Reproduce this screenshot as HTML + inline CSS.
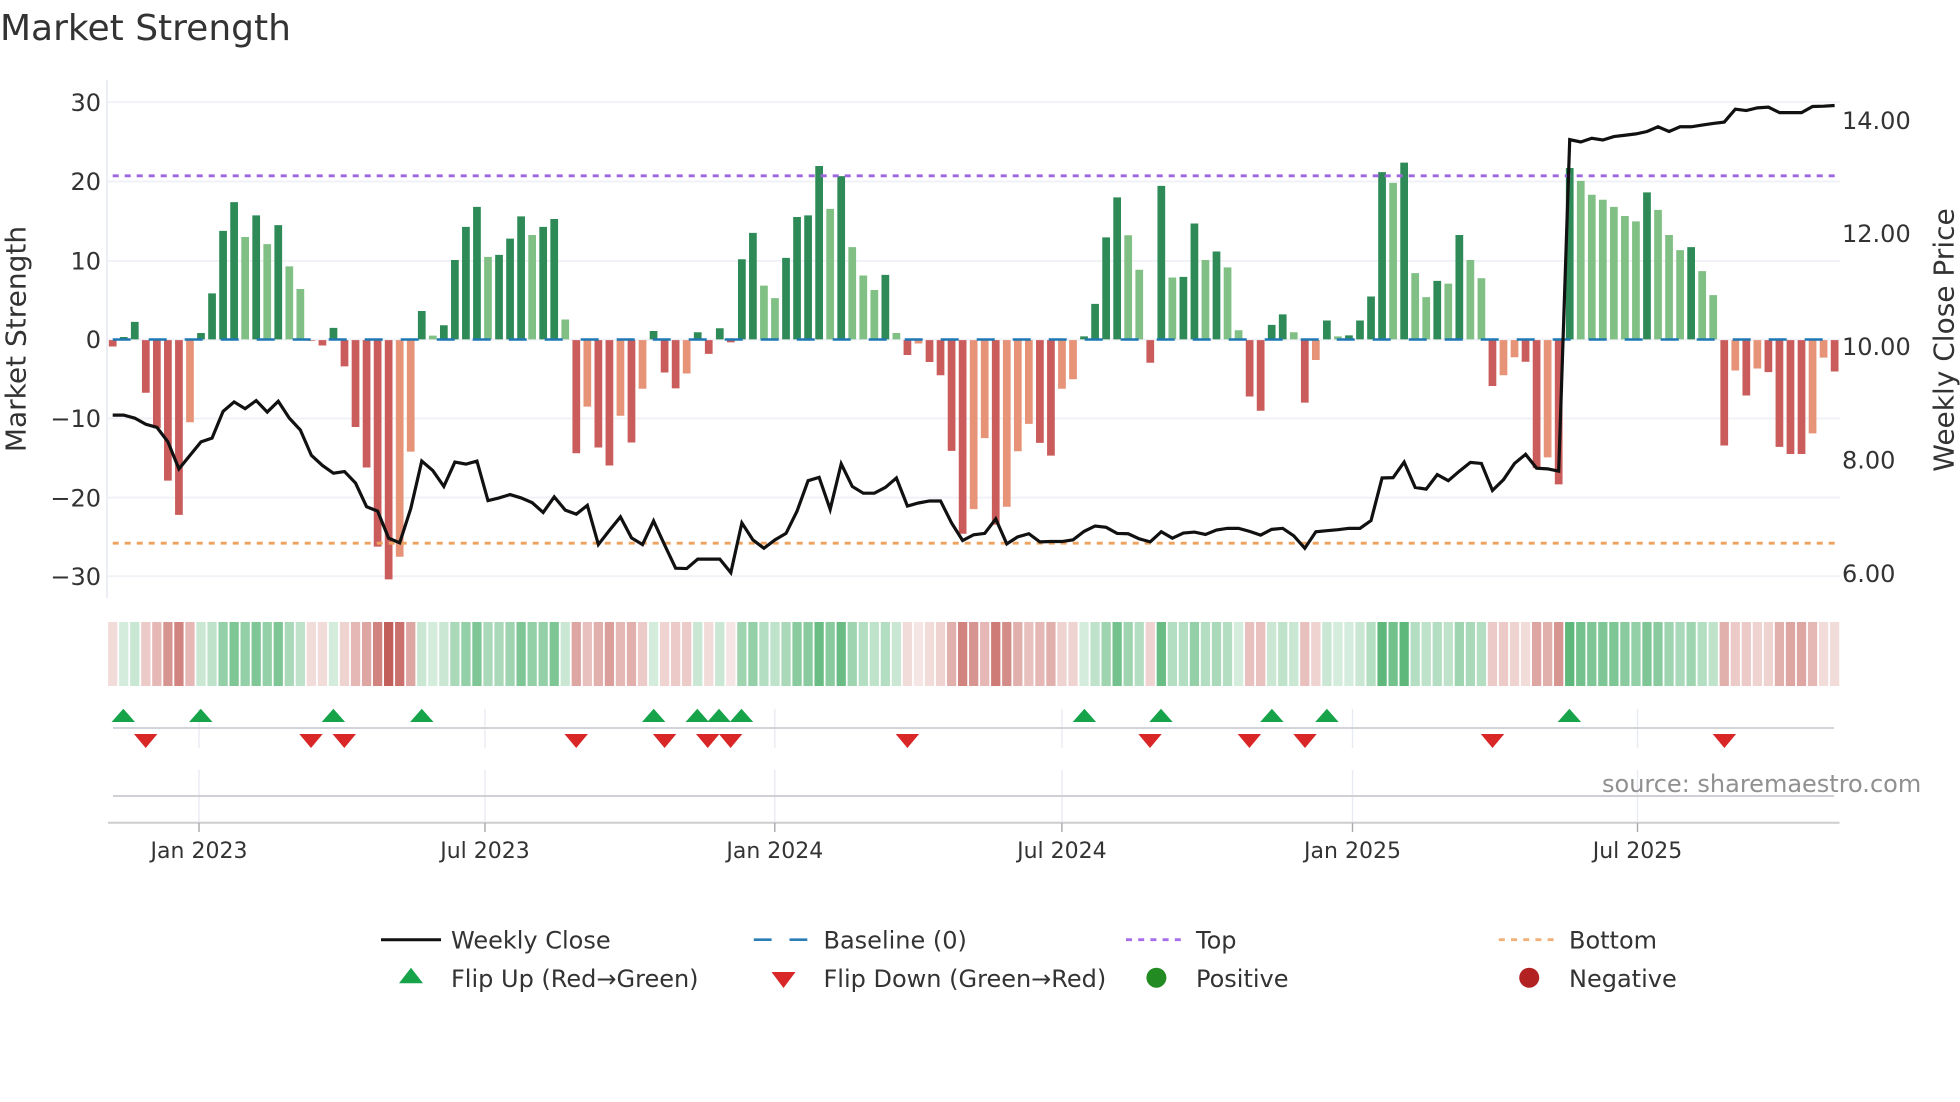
<!DOCTYPE html>
<html lang="en">
<head>
<meta charset="utf-8">
<title>Market Strength</title>
<style>
html,body{margin:0;padding:0;background:#fff;width:1960px;height:1102px;overflow:hidden}
svg{display:block;position:absolute;left:0;top:0}
text{font-family:"DejaVu Sans","Liberation Sans",sans-serif;fill:#333}
.yt{font-size:24px;text-anchor:end}
.rt{font-size:24px}
.xt{font-size:22px;text-anchor:middle}
.lg{font-size:24px}
</style>
</head>
<body>
<svg width="1960" height="1102" viewBox="0 0 1960 1102" xmlns="http://www.w3.org/2000/svg">
<rect width="1960" height="1102" fill="#fff"/>
<text x="0" y="40" style="font-size:36px" fill="#333">Market Strength</text>

<!-- grid -->
<path d="M107 102.1H1840M107 181.5H1840M107 261H1840M107 339.6H1840M107 418.5H1840M107 497.6H1840M107 576.3H1840" stroke="#f1f2f7" stroke-width="2" fill="none"/>
<path d="M107 80V598" stroke="#eceef6" stroke-width="2" fill="none"/>

<!-- bars -->
<g transform="translate(112.7,70) scale(11.038,0.33801)" fill="none" stroke-width=".7">
<path stroke="#2e8b57" d="M1 797V790M2 797V745M8 797V778M9 797V661M10 797V476M11 797V391M13 797V430M15 797V459M20 797V763M28 797V713M30 797V755M31 797V562M32 797V464M33 797V405M35 797V547M36 797V499M37 797V433M39 797V464M40 797V441M49 797V772M53 797V776M55 797V764M57 797V560M58 797V482M61 797V556M62 797V435M63 797V430M64 797V284M66 797V314M70 797V606M88 797V788M89 797V692M90 797V495M91 797V377M95 797V343M97 797V612M98 797V454M100 797V537M105 797V754M106 797V723M110 797V741M112 797V785M113 797V741M114 797V670M115 797V302M117 797V274M120 797V624M122 797V488M132 797V290M139 797V362M143 797V524"/>
<path stroke="#81c084" d="M12 797V494M14 797V515M16 797V581M17 797V648M29 797V786M34 797V553M38 797V488M41 797V738M59 797V638M60 797V675M65 797V411M67 797V524M68 797V608M69 797V651M71 797V778M92 797V489M93 797V591M96 797V614M99 797V562M101 797V584M102 797V770M107 797V776M111 797V788M116 797V334M118 797V601M119 797V672M121 797V632M123 797V562M124 797V616M133 797V328M134 797V369M135 797V384M136 797V405M137 797V432M138 797V448M140 797V414M141 797V488M142 797V533M144 797V595M145 797V666"/>
<path stroke="#cb5c5c" d="M0 799V818M3 799V955M4 799V1060M5 799V1215M6 799V1316M18 799V801M19 799V815M21 799V877M22 799V1056M23 799V1176M24 799V1410M25 799V1507M42 799V1134M44 799V1117M45 799V1170M47 799V1102M50 799V895M51 799V942M54 799V840M56 799V806M72 799V843M74 799V864M75 799V903M76 799V1127M77 799V1372M80 799V1345M84 799V1103M85 799V1141M94 799V866M103 799V966M104 799V1008M108 799V984M125 799V935M128 799V863M129 799V1178M131 799V1226M146 799V1111M148 799V963M150 799V894M151 799V1115M152 799V1136M153 799V1136M156 799V892"/>
<path stroke="#e69378" d="M7 799V1042M26 799V1440M27 799V1129M43 799V996M46 799V1023M48 799V943M52 799V898M73 799V809M78 799V1299M79 799V1089M81 799V1292M82 799V1128M83 799V1047M86 799V943M87 799V915M109 799V858M126 799V903M127 799V850M130 799V1146M147 799V889M149 799V883M154 799V1075M155 799V851"/>
</g>

<!-- reference lines -->
<path d="M112.7 339.5H1834.7" stroke="#1f77b4" stroke-width="2.6" stroke-dasharray="18 18" fill="none"/>
<path d="M112.7 175.8H1834.7" stroke="#a066e0" stroke-width="2.8" stroke-dasharray="6 6" fill="none"/>
<path d="M112.7 543.2H1834.7" stroke="#eda35f" stroke-width="2.8" stroke-dasharray="6 6" fill="none"/>

<!-- weekly close -->
<g transform="translate(112.7,70) scale(11.038,0.33801)">
<polyline fill="none" stroke="#111" stroke-width="3.2" vector-effect="non-scaling-stroke" stroke-linejoin="miter" points="0,1021 1,1021 2,1030 3,1048 4,1057 5,1100 6,1180 7,1140 8,1100 9,1089 10,1010 11,982 12,1002 13,978 14,1012 15,980 16,1030 17,1065 18,1140 19,1170 20,1193 21,1188 22,1222 23,1292 24,1305 25,1385 26,1399 27,1298 28,1157 29,1185 30,1232 31,1160 32,1166 33,1157 34,1274 35,1266 36,1256 37,1266 38,1280 39,1309 40,1263 41,1302 42,1314 43,1288 44,1404 45,1362 46,1322 47,1384 48,1404 49,1334 50,1405 51,1474 52,1475 53,1447 54,1447 55,1447 56,1487 57,1340 58,1390 59,1415 60,1390 61,1371 62,1305 63,1215 64,1205 65,1300 66,1165 67,1232 68,1252 69,1252 70,1235 71,1207 72,1290 73,1281 74,1275 75,1275 76,1340 77,1392 78,1375 79,1371 80,1328 81,1402 82,1381 83,1372 84,1396 85,1395 86,1395 87,1390 88,1365 89,1349 90,1353 91,1371 92,1372 93,1387 94,1396 95,1366 96,1385 97,1370 98,1367 99,1374 100,1361 101,1356 102,1356 103,1365 104,1376 105,1359 106,1356 107,1378 108,1415 109,1366 110,1363 111,1360 112,1356 113,1356 114,1333 115,1207 116,1206 117,1160 118,1235 119,1240 120,1197 121,1215 122,1187 123,1161 124,1164 125,1244 126,1212 127,1164 128,1137 129,1178 130,1180 131,1187 132,206 133,213 134,202 135,207 136,197 137,193 138,189 139,182 140,168 141,182 142,168 143,168 144,163 145,158 146,154 147,116 148,120 149,112 150,110 151,126 152,126 153,126 154,108 155,107 156,105"/>
</g>

<!-- y ticks -->
<text class="yt" x="101" y="110.8">30</text>
<text class="yt" x="101" y="190.2">20</text>
<text class="yt" x="101" y="269.7">10</text>
<text class="yt" x="101" y="348.2">0</text>
<text class="yt" x="101" y="427.2">−10</text>
<text class="yt" x="101" y="506.3">−20</text>
<text class="yt" x="101" y="585">−30</text>
<text class="rt" x="1842" y="128.8">14.00</text>
<text class="rt" x="1842" y="242">12.00</text>
<text class="rt" x="1842" y="355">10.00</text>
<text class="rt" x="1842" y="468.4">8.00</text>
<text class="rt" x="1842" y="581.8">6.00</text>
<text transform="translate(25.5,339) rotate(-90)" text-anchor="middle" style="font-size:28px">Market Strength</text>
<text transform="translate(1953.5,340) rotate(-90)" text-anchor="middle" style="font-size:28px">Weekly Close Price</text>

<!-- heat strip -->
<g transform="translate(112.7,0) scale(11.038,1)" fill="none" stroke-width=".84">
<g stroke="rgb(189,78,72)">
<path stroke-opacity=".15" d="M56 622v64M73 622v64"/>
<path stroke-opacity=".2" d="M0 622v64M18 622v64M19 622v64M54 622v64M72 622v64M74 622v64M128 622v64M155 622v64M156 622v64"/>
<path stroke-opacity=".25" d="M21 622v64M50 622v64M75 622v64M86 622v64M87 622v64M94 622v64M109 622v64M127 622v64M149 622v64M150 622v64"/>
<path stroke-opacity=".3" d="M3 622v64M48 622v64M51 622v64M52 622v64M125 622v64M126 622v64M147 622v64M148 622v64"/>
<path stroke-opacity=".35" d="M43 622v64M83 622v64M103 622v64M104 622v64M108 622v64"/>
<path stroke-opacity=".4" d="M4 622v64M7 622v64M22 622v64M46 622v64M79 622v64M84 622v64M154 622v64"/>
<path stroke-opacity=".45" d="M44 622v64M47 622v64M76 622v64M82 622v64M85 622v64M130 622v64M146 622v64M151 622v64"/>
<path stroke-opacity=".5" d="M23 622v64M27 622v64M42 622v64M129 622v64M152 622v64M153 622v64"/>
<path stroke-opacity=".55" d="M45 622v64"/>
<path stroke-opacity=".6" d="M5 622v64M78 622v64M131 622v64"/>
<path stroke-opacity=".65" d="M81 622v64"/>
<path stroke-opacity=".7" d="M6 622v64M24 622v64M77 622v64"/>
<path stroke-opacity=".75" d="M80 622v64"/>
<path stroke-opacity=".8" d="M26 622v64"/>
<path stroke-opacity=".9" d="M25 622v64"/>
</g>
<g stroke="rgb(40,160,80)">
<path stroke-opacity=".2" d="M1 622v64M20 622v64M29 622v64M49 622v64M88 622v64M102 622v64M111 622v64M112 622v64"/>
<path stroke-opacity=".25" d="M2 622v64M8 622v64M28 622v64M30 622v64M41 622v64M53 622v64M55 622v64M71 622v64M105 622v64M107 622v64M110 622v64M113 622v64"/>
<path stroke-opacity=".3" d="M9 622v64M17 622v64M60 622v64M69 622v64M89 622v64M106 622v64M119 622v64M121 622v64M145 622v64"/>
<path stroke-opacity=".35" d="M59 622v64M68 622v64M70 622v64M93 622v64M96 622v64M97 622v64M99 622v64M101 622v64M114 622v64M118 622v64M120 622v64M124 622v64M144 622v64"/>
<path stroke-opacity=".4" d="M16 622v64M31 622v64M34 622v64M35 622v64M61 622v64M100 622v64M123 622v64M142 622v64"/>
<path stroke-opacity=".45" d="M36 622v64M57 622v64M67 622v64M90 622v64M92 622v64M122 622v64M141 622v64M143 622v64"/>
<path stroke-opacity=".5" d="M10 622v64M12 622v64M14 622v64M32 622v64M38 622v64M39 622v64M58 622v64M98 622v64M138 622v64"/>
<path stroke-opacity=".55" d="M62 622v64M63 622v64M65 622v64M137 622v64M140 622v64"/>
<path stroke-opacity=".6" d="M11 622v64M13 622v64M15 622v64M33 622v64M37 622v64M40 622v64M134 622v64M135 622v64M136 622v64M139 622v64"/>
<path stroke-opacity=".65" d="M91 622v64M116 622v64M133 622v64"/>
<path stroke-opacity=".7" d="M64 622v64M66 622v64M95 622v64"/>
<path stroke-opacity=".75" d="M115 622v64M117 622v64M132 622v64"/>
</g>
</g>

<!-- lower panels -->
<path d="M199 708.7V748M485 708.7V748M774.8 708.7V748M1061.9 708.7V748M1352.5 708.7V748M1637.5 708.7V748M199 770V822M485 770V822M774.8 770V822M1061.9 770V822M1352.5 770V822M1637.5 770V822" stroke="#e9ebf2" stroke-width="1.4" fill="none"/>
<path d="M113 728H1834" stroke="#d3d4da" stroke-width="2" fill="none"/>
<path d="M113 796H1834" stroke="#d0d0d4" stroke-width="2" fill="none"/>
<path d="M108 822.7H1839.5" stroke="#cdcdd0" stroke-width="2" fill="none"/>
<path d="M199 823V832M485 823V832M774.8 823V832M1061.9 823V832M1352.5 823V832M1637.5 823V832" stroke="#a8a8ac" stroke-width="1.4" fill="none"/>

<!-- flip markers -->
<g fill="#16a34a">
<path d="M123.3 708.7l11.7 13.3h-23.4z"/>
<path d="M200.8 708.7l11.7 13.3h-23.4z"/>
<path d="M333.4 708.7l11.7 13.3h-23.4z"/>
<path d="M421.8 708.7l11.7 13.3h-23.4z"/>
<path d="M653.7 708.7l11.7 13.3h-23.4z"/>
<path d="M697.3 708.7l11.7 13.3h-23.4z"/>
<path d="M719 708.7l11.7 13.3h-23.4z"/>
<path d="M741.5 708.7l11.7 13.3h-23.4z"/>
<path d="M1084.4 708.7l11.7 13.3h-23.4z"/>
<path d="M1161 708.7l11.7 13.3h-23.4z"/>
<path d="M1271.9 708.7l11.7 13.3h-23.4z"/>
<path d="M1326.9 708.7l11.7 13.3h-23.4z"/>
<path d="M1569.4 708.7l11.7 13.3h-23.4z"/>
</g>
<g fill="#d92626">
<path d="M145.7 748l-11.7 -14h23.4z"/>
<path d="M311 748l-11.7 -14h23.4z"/>
<path d="M344.3 748l-11.7 -14h23.4z"/>
<path d="M576.2 748l-11.7 -14h23.4z"/>
<path d="M664.6 748l-11.7 -14h23.4z"/>
<path d="M707.7 748l-11.7 -14h23.4z"/>
<path d="M730.6 748l-11.7 -14h23.4z"/>
<path d="M907.4 748l-11.7 -14h23.4z"/>
<path d="M1150 748l-11.7 -14h23.4z"/>
<path d="M1249.4 748l-11.7 -14h23.4z"/>
<path d="M1305 748l-11.7 -14h23.4z"/>
<path d="M1492.5 748l-11.7 -14h23.4z"/>
<path d="M1724.4 748l-11.7 -14h23.4z"/>
</g>

<text x="1602" y="792" style="font-size:24px;fill:#909090">source: sharemaestro.com</text>

<!-- x ticks -->
<text class="xt" x="199" y="858">Jan 2023</text>
<text class="xt" x="485" y="858">Jul 2023</text>
<text class="xt" x="774.8" y="858">Jan 2024</text>
<text class="xt" x="1061.9" y="858">Jul 2024</text>
<text class="xt" x="1352.5" y="858">Jan 2025</text>
<text class="xt" x="1637.5" y="858">Jul 2025</text>

<!-- legend -->
<path d="M381 939.7H441" stroke="#111" stroke-width="3" fill="none"/>
<text class="lg" x="451" y="948.5">Weekly Close</text>
<path d="M753.8 939.7H771.6M789.5 939.7H807.3" stroke="#2b7db5" stroke-width="2.6" fill="none"/>
<text class="lg" x="823.5" y="948.5">Baseline (0)</text>
<path d="M1126 939.7H1181.4" stroke="#a66ee8" stroke-width="2.8" stroke-dasharray="6 6.2" fill="none"/>
<text class="lg" x="1196" y="948.5">Top</text>
<path d="M1498.8 939.7H1554" stroke="#efb07a" stroke-width="2.8" stroke-dasharray="6 6.2" fill="none"/>
<text class="lg" x="1569" y="948.5">Bottom</text>
<path d="M411 967.7l12 15.6h-24z" fill="#16a34a"/>
<text class="lg" x="451" y="987">Flip Up (Red→Green)</text>
<path d="M783.5 988l-12 -16h24z" fill="#d92626"/>
<text class="lg" x="823.5" y="987">Flip Down (Green→Red)</text>
<circle cx="1156.4" cy="977.7" r="10" fill="#228b22"/>
<text class="lg" x="1196" y="987">Positive</text>
<circle cx="1529.2" cy="977.7" r="10" fill="#b22222"/>
<text class="lg" x="1569" y="987">Negative</text>
</svg>
</body>
</html>
